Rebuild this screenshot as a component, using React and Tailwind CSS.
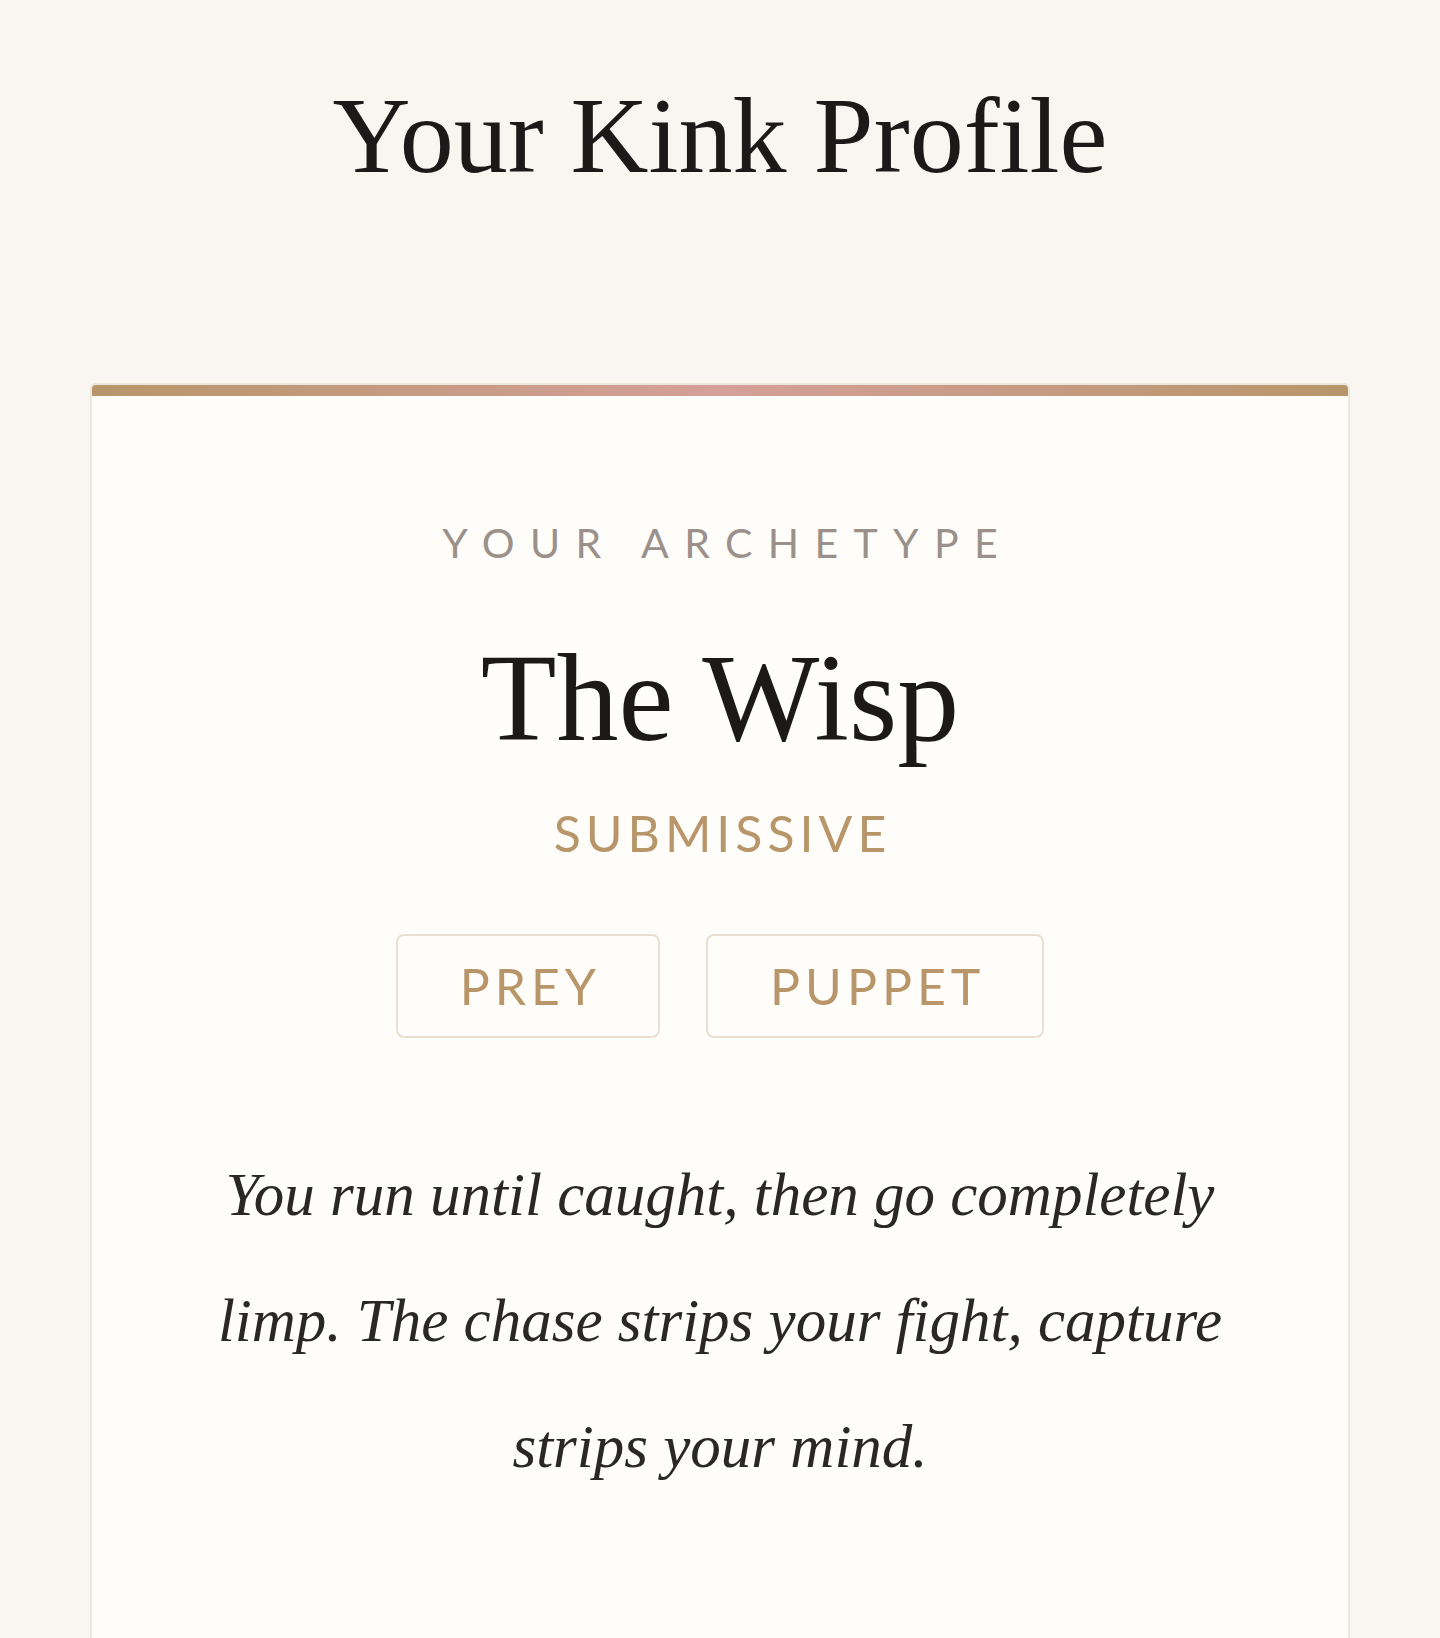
import React from "react";

const serif = { fontFamily: '"Liberation Serif", "Times New Roman", serif' };

export default function App() {
  const tags = ["Prey", "Puppet"];

  return (
    <div className="min-h-screen bg-[#f9f6f1] pt-[71px] font-['Lato',sans-serif]">
      <h1
        className="text-center text-[108px] leading-[1.2] font-normal text-[#1c1a18]"
        style={serif}
      >
        Your Kink Profile
      </h1>

      {/* Profile card */}
      <div className="mx-[90px] mt-[182px] overflow-hidden rounded-md border-2 border-[#ebe5dc] bg-[#fefdfa]">
        <div className="h-[11px] bg-gradient-to-r from-[#b8966a] via-[#d4a09a] to-[#b8966a]"></div>

        <div className="flex flex-col items-center pt-[126px] pb-[200px]">
          <p className="text-[41px] leading-none uppercase tracking-[0.375em] pl-[0.375em] text-[#9b918a]">
            Your Archetype
          </p>

          <h2
            className="mt-[74px] text-[124px] leading-none font-normal text-[#1c1a18]"
            style={serif}
          >
            The Wisp
          </h2>

          <p className="mt-[47px] text-[50px] leading-none uppercase tracking-[0.1em] pl-[0.1em] text-[#b8966a]">
            Submissive
          </p>

          <div className="mt-[76px] flex gap-[46px]">
            {tags.map((t) => (
              <span
                key={t}
                className="rounded-lg border-2 border-[#e9dfd0] pl-[62px] pr-[57px] py-[25px] text-[50px] leading-none uppercase tracking-[0.1em] text-[#b8966a]"
              >
                {t}
              </span>
            ))}
          </div>

          <p
            className="mt-[94px] px-[118px] text-center text-[61px] leading-[126px] italic text-[#2a2725]"
            style={serif}
          >
            You run until caught, then go completely limp. The chase strips your fight, capture strips your mind.
          </p>
        </div>
      </div>
    </div>
  );
}
